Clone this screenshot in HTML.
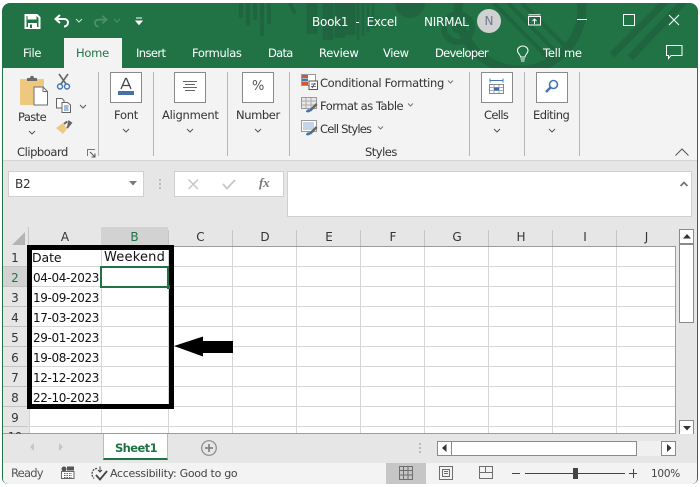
<!DOCTYPE html>
<html><head><meta charset="utf-8">
<style>
html,body{margin:0;padding:0;background:#fff}
#w{position:relative;width:700px;height:487px;overflow:hidden;background:#fff;font-family:"DejaVu Sans","Liberation Sans",sans-serif;}
#w div,#w span.a{position:absolute}
.t{position:absolute;white-space:nowrap;font-size:11.5px;line-height:14px;color:#333;letter-spacing:-.25px}
.w{color:#fff}
.cell{position:absolute;white-space:nowrap;font-size:12px;line-height:16px;color:#111;letter-spacing:-.37px}
.hd{position:absolute;width:24px;text-align:center;font-size:12px;line-height:16px;color:#333;left:3px}
.ch{position:absolute;top:229px;text-align:center;font-size:12px;line-height:16px;color:#333}
.box{position:absolute;background:#fff;border:1px solid #8a8a8a;box-sizing:border-box;width:32px;height:31px;top:72px}
.sep{position:absolute;top:72px;width:1px;height:84px;background:#b5b5b5}
svg{position:absolute;overflow:visible}
</style></head><body>
<div id="w">
<!-- window frame -->
<div style="left:2px;top:3px;width:696px;height:481px;background:#217346;border-radius:8px 8px 6px 6px"></div>
<!-- title pattern -->
<svg style="left:0;top:0" width="700" height="68" viewBox="0 0 700 68">
<defs><clipPath id="cp"><rect x="2" y="3" width="696" height="65"/></clipPath></defs>
<g clip-path="url(#cp)" fill="none" stroke="#1f6540">
<g stroke-width="4"><path d="M241 3V18M248 3V26M255 3V20M262 3V36M269 3V24"/></g>
<path d="M290 3L295 14" stroke-width="4"/>
<path d="M312 3V34M328 3V40M340 3V38M350 3V35" stroke-width="11"/>
<path d="M358 3V40M363 3V36M368 3V32M373 3V28" stroke-width="2.5"/>
<circle cx="410" cy="3" r="15" fill="#1f6540" stroke="none"/>
<circle cx="458" cy="28" r="14" stroke-width="6"/>
<circle cx="458" cy="28" r="4" stroke-width="3"/>
<circle cx="520" cy="8" r="62" stroke-width="9"/>
<path d="M494 3L550 60M508 3L562 58M522 3L574 55" stroke-width="4"/>
<path d="M690 -5L630 58M672 -5L612 55" stroke-width="7"/>
</g></svg>
<!-- QAT -->
<svg style="left:24px;top:14px" width="17" height="15" viewBox="0 0 17 15"><path d="M1.5 1H13L15.5 3.5V14H1.5Z" fill="none" stroke="#fff" stroke-width="2"/><path d="M4 1V5H12V1" fill="#fff" stroke="#fff"/><rect x="4" y="9" width="9" height="5" fill="#fff"/><rect x="6" y="10.5" width="2" height="3.5" fill="#217346"/></svg>
<svg style="left:54px;top:14px" width="16" height="14" viewBox="0 0 16 14"><path d="M6 1L1.5 5L6 9M2 5H10C13 5 14 7 14 8.5C14 10.5 12.5 12.5 10 12.5" fill="none" stroke="#fff" stroke-width="2"/></svg>
<svg style="left:75px;top:18px" width="8" height="5"><path d="M1 1L4 4L7 1" fill="none" stroke="#cfe3d8" stroke-width="1"/></svg>
<svg style="left:93px;top:15px" width="15" height="13" viewBox="0 0 16 14"><path d="M10 1L14.5 5L10 9M14 5H6C3 5 2 7 2 8.5C2 10.5 3.5 12.5 6 12.5" fill="none" stroke="#4d8f6c" stroke-width="2"/></svg>
<svg style="left:113px;top:18px" width="8" height="5"><path d="M1 1L4 4L7 1" fill="none" stroke="#4d8f6c" stroke-width="1"/></svg>
<svg style="left:135px;top:17px" width="8" height="9"><path d="M1 1H7M1 4H7L4 7.5L1 4Z" fill="#fff" stroke="#fff" stroke-width="1"/></svg>
<!-- title -->
<span class="t w" style="left:312px;top:15px;font-size:12px">Book1&nbsp; -&nbsp; Excel</span>
<span class="t w" style="left:424px;top:15px;font-size:12px">NIRMAL</span>
<div style="left:477px;top:9px;width:24px;height:24px;border-radius:50%;background:#d1d1d1;color:#6f7a8f;font-size:12px;line-height:24px;text-align:center">N</div>
<svg style="left:528px;top:14px" width="14" height="12" viewBox="0 0 14 12"><rect x=".5" y="2.5" width="12" height="8.5" fill="none" stroke="#fff"/><path d="M.5 .8H12.5" stroke="#fff"/><path d="M6.5 10V5M4.5 7L6.5 5L8.5 7" fill="none" stroke="#fff"/></svg>
<div style="left:577px;top:19px;width:10px;height:1px;background:#fff"></div>
<div style="left:623px;top:14px;width:10px;height:10px;border:1px solid #fff"></div>
<svg style="left:668px;top:14px" width="12" height="12"><path d="M1 1L11 11M11 1L1 11" stroke="#fff" stroke-width="1"/></svg>
<!-- tabs -->
<div style="left:64px;top:38px;width:58px;height:30px;background:#f3f3f3"></div>
<span class="t w" style="left:23px;top:46px">File</span>
<span class="t" style="left:76px;top:46px;color:#217346">Home</span>
<span class="t w" style="left:136px;top:46px;letter-spacing:-.6px">Insert</span>
<span class="t w" style="left:192px;top:46px;letter-spacing:-.37px">Formulas</span>
<span class="t w" style="left:268px;top:46px;letter-spacing:-.7px">Data</span>
<span class="t w" style="left:319px;top:46px">Review</span>
<span class="t w" style="left:383px;top:46px;letter-spacing:-.4px">View</span>
<span class="t w" style="left:435px;top:46px;letter-spacing:-.7px">Developer</span>
<span class="t w" style="left:543px;top:46px">Tell me</span>
<svg style="left:516px;top:45px" width="14" height="18" viewBox="0 0 14 18"><path d="M4.5 12C4.5 9.5 1.5 8.5 1.5 5.5C1.5 3 4 1 6.8 1C9.6 1 12 3 12 5.5C12 8.5 9 9.5 9 12Z" fill="none" stroke="#fff"/><path d="M4.5 14H9M5 16H8.5" stroke="#fff"/></svg>
<svg style="left:666px;top:45px" width="17" height="15" viewBox="0 0 17 15"><path d="M.5 .5H16V10.5H5L2.5 13.5V10.5H.5Z" fill="none" stroke="#fff"/></svg>
<!-- ribbon -->
<div style="left:3px;top:68px;width:694px;height:92px;background:#f3f3f3"></div>
<div style="left:3px;top:160px;width:694px;height:1px;background:#d4d4d4"></div>
<div style="left:3px;top:161px;width:694px;height:66px;background:#e6e6e6"></div>
<div class="sep" style="left:98px"></div>
<div class="sep" style="left:153px"></div>
<div class="sep" style="left:227px"></div>
<div class="sep" style="left:289px"></div>
<div class="sep" style="left:469px"></div>
<div class="sep" style="left:524px"></div>
<div class="sep" style="left:579px"></div>
<!-- paste icons -->
<svg style="left:19px;top:75px" width="30" height="32" viewBox="0 0 30 32"><rect x="1" y="4" width="24" height="26" rx="1" fill="#efc87f"/><path d="M8 5V3H11C11 0 15 0 15 3H18V6H8Z" fill="#6b6b6b"/><path d="M15 12H24L28.5 16.5V30H15Z" fill="#fff" stroke="#6e6e6e"/><path d="M24 12V16.5H28.5" fill="none" stroke="#6e6e6e"/></svg>
<svg style="left:56px;top:74px" width="16" height="16" viewBox="0 0 16 16"><path d="M3 0L10 10M12 0L5 10" stroke="#666" stroke-width="1.6"/><circle cx="4" cy="12.5" r="2.5" fill="none" stroke="#3f78b5" stroke-width="1.4"/><circle cx="11" cy="12.5" r="2.5" fill="none" stroke="#3f78b5" stroke-width="1.4"/></svg>
<svg style="left:56px;top:98px" width="16" height="15" viewBox="0 0 16 15"><path d="M.5 .5H6L8 2.5V10H.5Z" fill="#fff" stroke="#666"/><path d="M6 4.500H11.500L14.500 7V14.500H6Z" fill="#fff" stroke="#666"/><path d="M8 8H12.500M8 10H12.500M8 12H12.500" stroke="#3f78b5"/></svg>
<svg style="left:79px;top:104px" width="8" height="5"><path d="M1 1L4 4L7 1" fill="none" stroke="#555"/></svg>
<svg style="left:56px;top:120px" width="17" height="15" viewBox="0 0 17 15"><path d="M0 8L7 3L11 9L7 14Z" fill="#efc87f"/><path d="M8 4L11 1.500M11 8L15 3L12 1" fill="#666" stroke="#666" stroke-width="2"/></svg>
<span class="t" style="left:18px;top:110px;letter-spacing:-.6px">Paste</span>
<svg style="left:28px;top:130px" width="8" height="5"><path d="M1 1L4 4L7 1" fill="none" stroke="#555"/></svg>
<span class="t" style="left:17px;top:145px;letter-spacing:-.45px">Clipboard</span>
<svg style="left:87px;top:149px" width="9" height="9"><path d="M.5 7V.5H8" fill="none" stroke="#777"/><path d="M3 3L8 8M8 4.500V8H4.500" fill="none" stroke="#555"/></svg>
<!-- group buttons -->
<div class="box" style="left:110px"></div>
<svg style="left:117px;top:78px" width="18" height="18" viewBox="0 0 18 18"><path d="M4 11L8.500 0.500H9.500L14 11M5.500 7.500H12.500" fill="none" stroke="#444" stroke-width="1.300"/><rect x="1" y="13" width="16" height="4" fill="#4472a8"/></svg>
<span class="t" style="left:114px;top:108px">Font</span>
<svg style="left:122px;top:128px" width="8" height="5"><path d="M1 1L4 4L7 1" fill="none" stroke="#555"/></svg>
<div class="box" style="left:174px"></div>
<svg style="left:183px;top:81px" width="14" height="11"><path d="M0 .5H14M2 3.500H12M0 6.500H14M2 9.500H12" stroke="#666"/></svg>
<span class="t" style="left:162px;top:108px">Alignment</span>
<svg style="left:186px;top:128px" width="8" height="5"><path d="M1 1L4 4L7 1" fill="none" stroke="#555"/></svg>
<div class="box" style="left:242px"></div>
<span class="t" style="left:252px;top:80px;font-size:13px;color:#555">%</span>
<span class="t" style="left:236px;top:108px;letter-spacing:-.4px">Number</span>
<svg style="left:254px;top:128px" width="8" height="5"><path d="M1 1L4 4L7 1" fill="none" stroke="#555"/></svg>
<!-- styles -->
<svg style="left:301px;top:74px" width="17" height="16" viewBox="0 0 17 16"><rect x=".5" y=".5" width="14" height="11" fill="#fff" stroke="#999"/><rect x="1" y="1" width="6" height="3" fill="#d9532c"/><rect x="1" y="4.500" width="6" height="3" fill="#3f78b5"/><rect x="1" y="8" width="6" height="3" fill="#d9532c"/><rect x="8" y="7" width="8.500" height="8.500" fill="#fff" stroke="#555"/><path d="M10 10H15M10 12.500H15M11 14L14 9" stroke="#444" stroke-width=".8"/></svg>
<span class="t" style="left:320px;top:76px;letter-spacing:-.35px">Conditional Formatting</span>
<svg style="left:447px;top:80px" width="7" height="4"><path d="M1 .5L3.500 3L6 .5" fill="none" stroke="#777"/></svg>
<svg style="left:301px;top:97px" width="17" height="16" viewBox="0 0 17 16"><rect x=".5" y=".5" width="15" height="11" fill="#e8e8e8" stroke="#999"/><path d="M5 1V11M10 1V11M1 4H15M1 8H15" stroke="#aaa"/><path d="M8 13L15 6L16.500 8L10 14.500Z" fill="#666"/><path d="M5 15C5 12.500 8 11.500 10 13C10 15 7 16 5 15Z" fill="#3f78b5"/></svg>
<span class="t" style="left:320px;top:99px;letter-spacing:-.5px">Format as Table</span>
<svg style="left:407px;top:103px" width="7" height="4"><path d="M1 .5L3.500 3L6 .5" fill="none" stroke="#777"/></svg>
<svg style="left:301px;top:120px" width="17" height="16" viewBox="0 0 17 16"><rect x=".5" y=".5" width="15" height="11" fill="#fff" stroke="#999"/><rect x="2" y="2" width="11" height="8" fill="#c5d5e8"/><path d="M8 13L15 6L16.500 8L10 14.500Z" fill="#666"/><path d="M5 15C5 12.500 8 11.500 10 13C10 15 7 16 5 15Z" fill="#3f78b5"/></svg>
<span class="t" style="left:320px;top:122px;letter-spacing:-.8px">Cell Styles</span>
<svg style="left:377px;top:126px" width="7" height="4"><path d="M1 .5L3.500 3L6 .5" fill="none" stroke="#777"/></svg>
<span class="t" style="left:365px;top:145px;letter-spacing:-.5px">Styles</span>
<!-- cells/editing -->
<div class="box" style="left:481px"></div>
<svg style="left:489px;top:78px" width="16" height="18" viewBox="0 0 16 18"><path d="M1 2.500H14M1 .5V4.500M14 .5V4.500" stroke="#3f78b5"/><rect x=".5" y="6.500" width="14" height="9" fill="#fff" stroke="#888"/><path d="M5 7V15M10 7V15M1 9.500H14M1 12.500H14" stroke="#aaa"/><rect x="5" y="9.500" width="5" height="3" fill="#2f6db5"/></svg>
<span class="t" style="left:484px;top:108px;letter-spacing:-.65px">Cells</span>
<svg style="left:493px;top:128px" width="8" height="5"><path d="M1 1L4 4L7 1" fill="none" stroke="#555"/></svg>
<div class="box" style="left:536px"></div>
<svg style="left:545px;top:79px" width="14" height="15" viewBox="0 0 14 15"><circle cx="8.500" cy="5.500" r="4" fill="#fff" stroke="#3f78b5" stroke-width="1.600"/><path d="M5.500 8.500L1 13" stroke="#3f78b5" stroke-width="2.600"/></svg>
<span class="t" style="left:533px;top:108px;letter-spacing:-.55px">Editing</span>
<svg style="left:548px;top:128px" width="8" height="5"><path d="M1 1L4 4L7 1" fill="none" stroke="#555"/></svg>
<svg style="left:675px;top:148px" width="14" height="8"><path d="M.5 7.500L7 1L13.500 7.500" fill="none" stroke="#555"/></svg>
<!-- formula bar -->
<div style="left:8px;top:171px;width:136px;height:26px;background:#fff;border:1px solid #d0d0d0;box-sizing:border-box"></div>
<span class="t" style="left:15px;top:177px;font-size:12px">B2</span>
<svg style="left:129px;top:181px" width="9" height="5"><path d="M0 0H8L4 4.500Z" fill="#7a7a7a"/></svg>
<div style="left:159px;top:179px;width:2px;height:2px;background:#bbb"></div>
<div style="left:159px;top:183px;width:2px;height:2px;background:#bbb"></div>
<div style="left:159px;top:187px;width:2px;height:2px;background:#bbb"></div>
<div style="left:174px;top:171px;width:110px;height:26px;background:#fff;border:1px solid #d0d0d0;box-sizing:border-box"></div>
<svg style="left:188px;top:179px" width="11" height="11"><path d="M.5 .5L10 10M10 .5L.5 10" stroke="#c8c8c8" stroke-width="1.500"/></svg>
<svg style="left:222px;top:179px" width="14" height="11"><path d="M1 5L5 9.500L13 1" fill="none" stroke="#c8c8c8" stroke-width="1.800"/></svg>
<span class="t" style="left:259px;top:176px;font-family:'Liberation Serif',serif;font-style:italic;font-weight:bold;font-size:13px;color:#777">fx</span>
<div style="left:287px;top:171px;width:405px;height:46px;background:#fff;border:1px solid #d0d0d0;box-sizing:border-box"></div>
<svg style="left:680px;top:181px" width="8" height="6"><path d="M.5 5L4 1.500L7.500 5" fill="none" stroke="#777" stroke-width="1.800"/></svg>
<!-- sheet -->
<div style="left:3px;top:227px;width:673px;height:20px;background:#e6e6e6"></div>
<div style="left:3px;top:247px;width:26px;height:187px;background:#e6e6e6"></div>
<div style="left:29px;top:247px;width:647px;height:187px;background:#fff"></div>
<svg style="left:3px;top:227px" width="26" height="20"><path d="M22 5V18H9Z" fill="#b4b4b4"/><path d="M25.500 0V20" stroke="#c4c4c4"/></svg>
<div style="left:101px;top:227px;width:67px;height:20px;background:#d2d2d2"></div>
<div style="left:3px;top:267px;width:26px;height:20px;background:#d2d2d2"></div>
<svg style="left:0;top:0" width="700" height="487" shape-rendering="crispEdges">
<g stroke="#d6d6d6"><path d="M29.500 247V434M101.500 247V434M168.500 247V434M232.500 247V434M296.500 247V434M360.500 247V434M424.500 247V434M488.500 247V434M552.500 247V434M616.500 247V434M29 266.500H676M29 286.500H676M29 306.500H676M29 326.500H676M29 346.500H676M29 366.500H676M29 386.500H676M29 406.500H676M29 426.500H676"/></g>
<g stroke="#c4c4c4"><path d="M168.500 230V247M232.500 230V247M296.500 230V247M360.500 230V247M424.500 230V247M488.500 230V247M552.500 230V247M616.500 230V247"/><path d="M3 266.500H28M3 286.500H28M3 306.500H28M3 326.500H28M3 346.500H28M3 366.500H28M3 386.500H28M3 406.500H28M3 426.500H28"/></g>
<path d="M29 246.500H676M675.500 246V434M3 433.500H676" stroke="#9c9c9c"/>
</svg>
<span class="ch" style="left:29px;width:72px">A</span>
<span class="ch" style="left:101px;width:67px;color:#217346">B</span>
<span class="ch" style="left:168px;width:65px">C</span>
<span class="ch" style="left:233px;width:64px">D</span>
<span class="ch" style="left:297px;width:64px">E</span>
<span class="ch" style="left:361px;width:64px">F</span>
<span class="ch" style="left:425px;width:64px">G</span>
<span class="ch" style="left:489px;width:64px">H</span>
<span class="ch" style="left:553px;width:64px">I</span>
<span class="ch" style="left:617px;width:59px">J</span>
<span class="hd" style="top:250px">1</span>
<span class="hd" style="top:270px;color:#217346">2</span>
<span class="hd" style="top:290px">3</span>
<span class="hd" style="top:310px">4</span>
<span class="hd" style="top:330px">5</span>
<span class="hd" style="top:350px">6</span>
<span class="hd" style="top:370px">7</span>
<span class="hd" style="top:390px">8</span>
<span class="hd" style="top:410px">9</span>
<span class="hd" style="top:429px;height:5px;overflow:hidden;font-size:11px">10</span>
<!-- cells -->
<span class="cell" style="left:32px;top:250px;font-size:12.5px;letter-spacing:-.1px">Date</span>
<span class="cell" style="left:104px;top:250px;font-size:13px;letter-spacing:.2px">Weekend</span>
<span class="cell" style="left:33px;top:270px">04-04-2023</span>
<span class="cell" style="left:33px;top:290px">19-09-2023</span>
<span class="cell" style="left:33px;top:310px">17-03-2023</span>
<span class="cell" style="left:33px;top:330px">29-01-2023</span>
<span class="cell" style="left:33px;top:350px">19-08-2023</span>
<span class="cell" style="left:33px;top:370px">12-12-2023</span>
<span class="cell" style="left:33px;top:390px">22-10-2023</span>
<!-- selection -->
<div style="left:100px;top:266px;width:69px;height:22px;border:2px solid #217346;box-sizing:border-box"></div>
<!-- annotation box -->
<div style="left:27px;top:245px;width:147px;height:164px;border:5px solid #000;box-sizing:border-box"></div>
<div style="left:167px;top:285px;width:3px;height:4px;background:#217346"></div>
<svg style="left:172px;top:336px" width="62" height="22" viewBox="0 0 62 22"><path d="M2 10L31 .5V5H61V17H31V20.500Z" fill="#000"/></svg>
<!-- v scrollbar -->
<div style="left:676px;top:227px;width:21px;height:207px;background:#e6e6e6"></div>
<div style="left:679px;top:229px;width:15px;height:15px;background:#fff;border:1px solid #8a8a8a;box-sizing:border-box"></div>
<svg style="left:683px;top:234px" width="8" height="5"><path d="M4 0L8 4.500H0Z" fill="#333"/></svg>
<div style="left:679px;top:244px;width:15px;height:79px;background:#fff;border:1px solid #8a8a8a;box-sizing:border-box"></div>
<div style="left:679px;top:420px;width:15px;height:15px;background:#fff;border:1px solid #8a8a8a;box-sizing:border-box"></div>
<svg style="left:683px;top:426px" width="8" height="5"><path d="M0 0H8L4 4.500Z" fill="#333"/></svg>
<!-- tab bar -->
<div style="left:3px;top:434px;width:694px;height:29px;background:#e6e6e6"></div>
<div style="left:103px;top:434px;width:65px;height:26px;background:#fff;border-left:1px solid #bbb;border-right:1px solid #bbb;border-bottom:2px solid #217346;box-sizing:border-box"></div>
<span class="t" style="left:115px;top:441px;font-weight:bold;font-size:11.5px;letter-spacing:-.6px;color:#217346">Sheet1</span>
<svg style="left:30px;top:443px" width="40" height="9"><path d="M4 0V8L0 4Z" fill="#c6c6c6"/><path d="M29 0V8L33 4Z" fill="#c6c6c6"/></svg>
<svg style="left:201px;top:440px" width="16" height="16"><circle cx="8" cy="8" r="7.300" fill="none" stroke="#8a8a8a" stroke-width="1.200"/><path d="M4 8H12M8 4V12" stroke="#777" stroke-width="1.500"/></svg>
<div style="left:419px;top:443px;width:2px;height:2px;background:#bbb"></div>
<div style="left:419px;top:447px;width:2px;height:2px;background:#bbb"></div>
<div style="left:419px;top:451px;width:2px;height:2px;background:#bbb"></div>
<div style="left:437px;top:441px;width:15px;height:15px;background:#fff;border:1px solid #8a8a8a;box-sizing:border-box"></div>
<svg style="left:442px;top:444px" width="5" height="9"><path d="M4.500 0V8L0 4Z" fill="#333"/></svg>
<div style="left:451px;top:441px;width:186px;height:15px;background:#fff;border:1px solid #8a8a8a;box-sizing:border-box"></div>
<div style="left:637px;top:441px;width:25px;height:15px;background:#f0f0f0"></div>
<div style="left:661px;top:441px;width:15px;height:15px;background:#fff;border:1px solid #8a8a8a;box-sizing:border-box"></div>
<svg style="left:667px;top:444px" width="5" height="9"><path d="M0 0V8L4.500 4Z" fill="#333"/></svg>
<!-- status -->
<div style="left:3px;top:463px;width:694px;height:21px;background:#f3f3f3;border-radius:0 0 5px 5px"></div>
<span class="t" style="left:11px;top:466px;color:#555;letter-spacing:-.8px">Ready</span>
<svg style="left:61px;top:466px" width="14" height="13" viewBox="0 0 14 13"><circle cx="3" cy="3" r="2.500" fill="#555"/><rect x="6" y=".5" width="7" height="4" fill="#555"/><rect x=".5" y="5.500" width="12.500" height="7" fill="#fff" stroke="#666"/><path d="M3 7.500H11M3 9.500H11M3 11.500H11" stroke="#666" stroke-dasharray="1.500 1"/></svg>
<svg style="left:91px;top:466px" width="17" height="15" viewBox="0 0 17 15"><path d="M6 2.500C3 2.500 1 5 1 8C1 10 2 11.500 3 12.500" fill="none" stroke="#444" stroke-dasharray="2 1" stroke-width="1.200"/><path d="M9 .5V6M7 4L9 6L11 4" fill="none" stroke="#444"/><path d="M5 9L9 13.500L16 5" fill="none" stroke="#444" stroke-width="1.800"/></svg>
<span class="t" style="left:110px;top:467px;font-size:11px;color:#444;letter-spacing:-.3px">Accessibility: Good to go</span>
<div style="left:386px;top:463px;width:40px;height:21px;background:#c6c6c6"></div>
<svg style="left:399px;top:466px" width="14" height="14" shape-rendering="crispEdges"><path d="M.5 .5H13.500V13.500H.5ZM4.500 .5V13.500M9 .5V13.500M.5 4.500H13.500M.5 9H13.500" fill="none" stroke="#6e6e6e"/></svg>
<svg style="left:439px;top:466px" width="14" height="14" shape-rendering="crispEdges"><path d="M.5 .5H13.500V13.500H.5Z" fill="none" stroke="#6e6e6e"/><path d="M3.500 3.500H10.500V10.500H3.500ZM5 5.500H9M5 7.500H9" fill="none" stroke="#6e6e6e"/></svg>
<svg style="left:479px;top:466px" width="14" height="14" shape-rendering="crispEdges"><path d="M.5 .5H13.500V12.500H.5ZM6.500 .5V6.500H.5M6.500 6.500H13.500" fill="none" stroke="#6e6e6e"/></svg>
<div style="left:512px;top:473px;width:8px;height:1px;background:#444"></div>
<div style="left:525px;top:473px;width:100px;height:1px;background:#444"></div>
<div style="left:573px;top:468px;width:5px;height:11px;background:#444"></div>
<div style="left:629px;top:473px;width:8px;height:1px;background:#444"></div>
<div style="left:633px;top:469px;width:1px;height:9px;background:#444"></div>
<span class="t" style="left:651px;top:467px;font-size:10.500px;color:#444">100%</span>
</div>
</body></html>
